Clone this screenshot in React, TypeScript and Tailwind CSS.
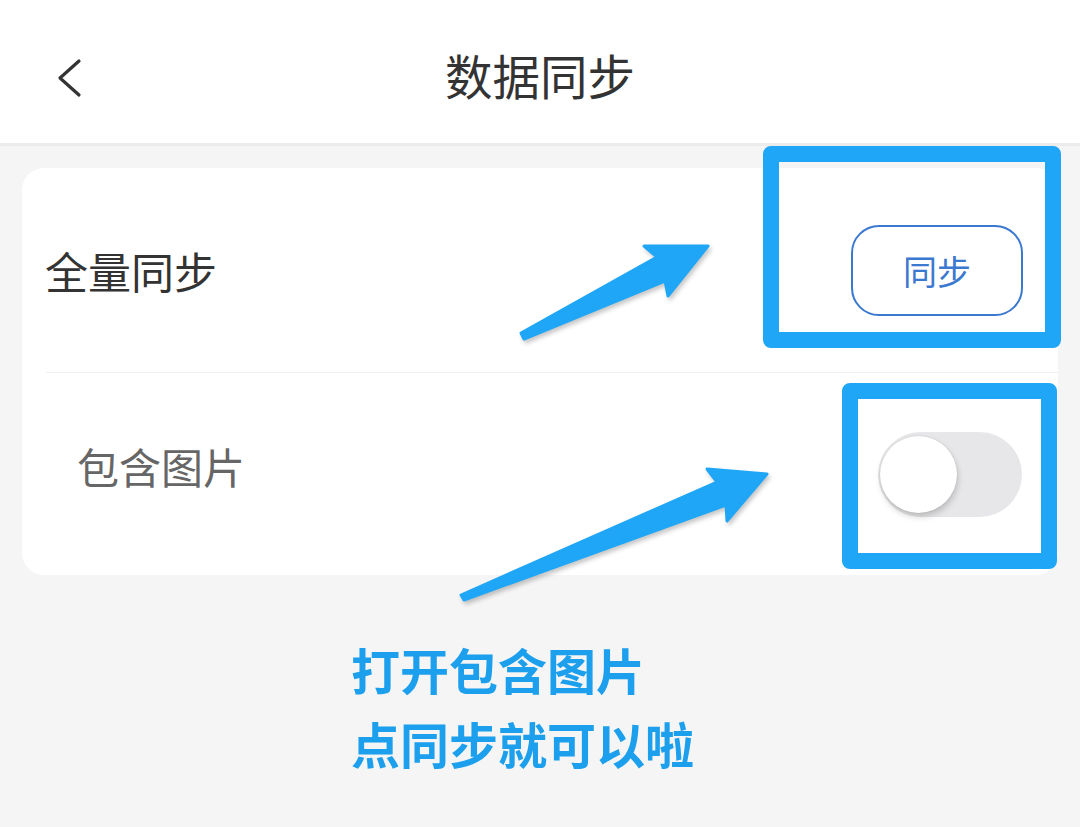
import React from "react";

function Arrow({ points }: { points: string }) {
  return (
    <polygon
      points={points}
      fill="#1fa6f6"
      stroke="#1fa6f6"
      strokeWidth={3}
      strokeLinejoin="round"
    />
  );
}

export default function App() {
  return (
    <div className="relative w-[1080px] h-[827px] overflow-hidden bg-[#f5f5f5] font-['Noto_Sans_CJK_SC','Noto_Sans',sans-serif]">
      {/* Header */}
      <div className="relative h-[143px] bg-white flex items-center justify-center pt-[6px]">
        <svg
          className="absolute left-[52px] top-[54px]"
          width="34"
          height="48"
          viewBox="0 0 34 48"
          fill="none"
        >
          <path
            d="M27 7 L8 24 L27 41"
            stroke="#333333"
            strokeWidth="3.2"
            strokeLinecap="round"
            strokeLinejoin="round"
          />
        </svg>
        <span className="text-[47.5px] leading-[60px] text-[#333333]">数据同步</span>
      </div>
      <div className="h-[3px] bg-[#ececec]" />

      {/* Card */}
      <div className="mx-[22px] mt-[22px] w-[1036px] rounded-[22px] bg-white">
        <div className="h-[204px] flex items-center justify-between pl-[23px] pr-[35px]">
          <span className="text-[43px] leading-[56px] text-[#333333]">全量同步</span>
          <button className="w-[172px] h-[91px] rounded-[28px] border-2 border-[#3b78d0] text-[34px] leading-[40px] text-[#3b78d0] flex items-center justify-center pt-[2px]">
            同步
          </button>
        </div>
        <div className="ml-[24px] h-px bg-[#f0f0f0]" />
        <div className="h-[202px] flex items-center justify-between pl-[55px] pr-[36px]">
          <span className="text-[42px] leading-[56px] text-[#666666] pb-[16px]">包含图片</span>
          <div className="relative w-[144px] h-[85px] rounded-full bg-[#e7e7e9]">
            <div className="absolute left-[2px] top-[4px] w-[77px] h-[77px] rounded-full bg-white shadow-[1px_4px_6px_rgba(0,0,0,0.18),0_0_2px_rgba(0,0,0,0.12)]" />
          </div>
        </div>
      </div>

      {/* Annotation text */}
      <div className="mt-[57px] pl-[351px] text-[49px] leading-[74px] font-bold text-[#1c9fec]">
        <div>打开包含图片</div>
        <div>点同步就可以啦</div>
      </div>

      {/* Annotation boxes */}
      <div className="absolute left-[763px] top-[146px] w-[298px] h-[202px] border-[16px] border-[#1fa6f6] rounded-[8px]" />
      <div className="absolute left-[842px] top-[383px] w-[215px] h-[186px] border-[16px] border-[#1fa6f6] rounded-[8px]" />

      {/* Arrows */}
      <svg
        className="absolute inset-0 pointer-events-none drop-shadow-[2px_3px_2px_rgba(0,0,0,0.22)]"
        width="1080"
        height="827"
        viewBox="0 0 1080 827"
      >
        <Arrow points="708,246 644,246 657,257 521,333 524,339 665,281 668,296" />
        <Arrow points="767,474 707,469 717,482 461,595 464,600 726,505 727,521" />
      </svg>
    </div>
  );
}
